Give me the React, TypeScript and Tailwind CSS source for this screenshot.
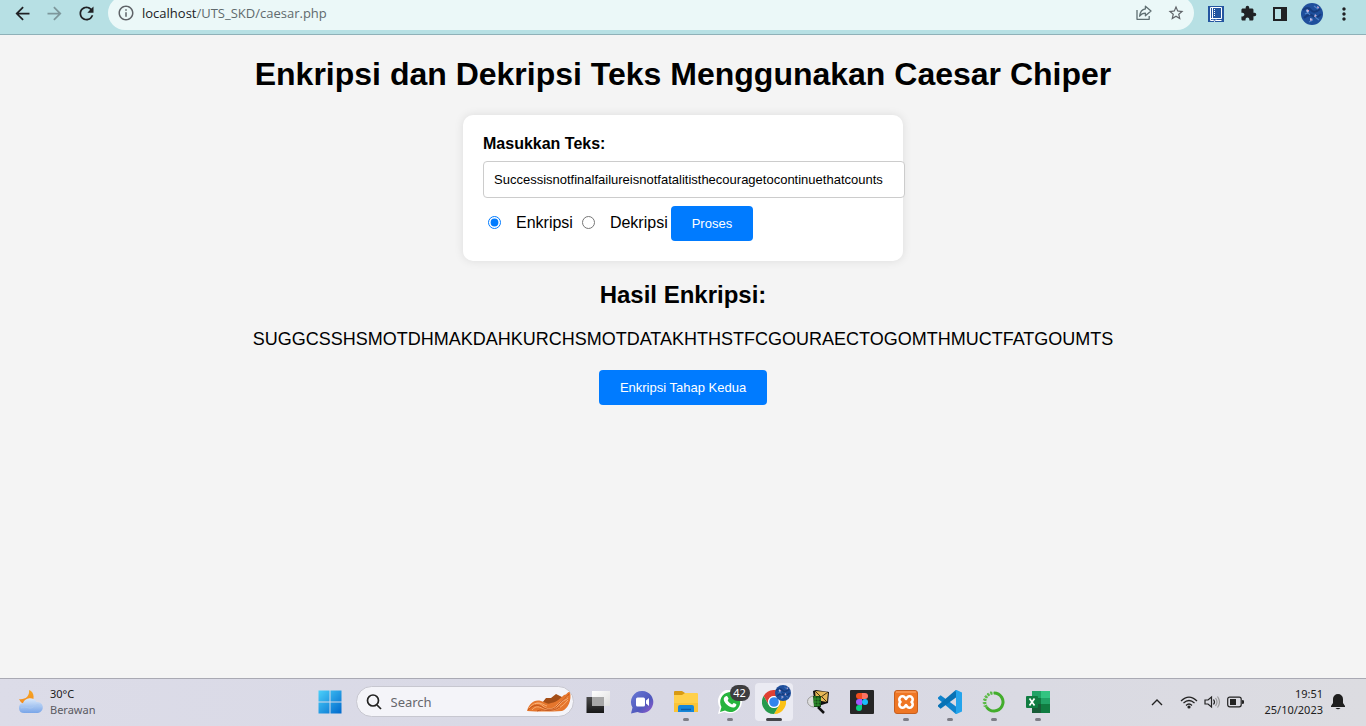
import { useState, type ReactNode } from "react";
import { MdArrowBack, MdArrowForward, MdRefresh, MdInfoOutline, MdStarBorder, MdExtension, MdMoreVert } from "react-icons/md";

function ShareIcon() {
  return (
    <svg viewBox="0 0 18 18" className="size-[18px]" fill="none" stroke="#5f6f72" strokeWidth="1.3" strokeLinejoin="round">
      <path d="M2 6v9.3h12.2V12" />
      <path d="M10.4 2.2 16 7l-5.600 4.800V9.200C7.600 9.200 6 10.200 4.600 12.200 5 8.600 6.800 5.400 10.400 4.900Z" />
    </svg>
  );
}

function JournalIcon() {
  return (
    <svg viewBox="0 0 16 16" className="size-4">
      <rect width="16" height="16" fill="#2455a0" />
      <path d="M2.500 13V1.500H13.500V12.500H2.500M2.500 12.500V14.500H5M8 14.500h5.500M4.500 1.500v11M5 13.500l1.500 2 1.500-2" fill="none" stroke="#fff" />
      <path d="M6.500 3v8" stroke="#fff" strokeDasharray="1 1" />
    </svg>
  );
}

function SidePanelIcon() {
  return (
    <svg viewBox="0 0 14 14" className="size-[14px]">
      <path fill="#202124" d="M0 0h14v14H0zM2 2v10h6V2z" fillRule="evenodd" />
    </svg>
  );
}

function Avatar({ className }: { className: string }) {
  return (
    <svg viewBox="0 0 22 22" className={className}>
      <circle cx="11" cy="11" r="11" fill="#1f4f9c" />
      <path d="M2 7q5-4 8 0t9-1M3 15q5-5 9-2t8-2" fill="none" stroke="#163b7d" strokeWidth="2" />
      <path d="M4 11q3-2 5 1M13 3l4 3M14 14l4 3M8 19l4-2" fill="none" stroke="#4c82c9" strokeWidth="1.200" />
      <path d="m6 6 2 2-1 2-2-2zM14 11l2 2-3 1zM9 15l3 1-3 2zM16 3l2 1-1 2z" fill="#b9c3ec" />
      <path d="m7 7 1 1M14 13h1M10 17h1M17 4v1" stroke="#e58eb2" />
    </svg>
  );
}

function BrowserBar() {
  return (
    <header className="flex h-[35px] shrink-0 items-start overflow-hidden border-b border-[#8fb1b8] bg-[#b7e0e4] px-[6px]">
      <nav className="flex h-[27px] items-center text-[#202124]">
        <button aria-label="Kembali" className="flex w-8 justify-center"><MdArrowBack size={21} /></button>
        <button aria-label="Maju" className="flex w-8 justify-center text-[#7d979b]"><MdArrowForward size={21} /></button>
        <button aria-label="Muat ulang" className="flex w-8 justify-center"><MdRefresh size={21} /></button>
      </nav>
      <div className="-mt-1 mr-[6px] ml-[6px] flex h-[34px] flex-1 items-center rounded-full bg-[#ebf8f8] pr-[2px] pl-[9px] text-[#5f6368]">
        <MdInfoOutline size={18} />
        <a href="#" className="ml-[7px] flex-1 pt-[2px] font-['Open_Sans','Noto_Sans',sans-serif] text-[13px] text-[#5f6a6d]">
          <span className="text-[#202124]">localhost</span>/UTS_SKD/caesar.php
        </a>
        <button aria-label="Bagikan" className="flex w-8 justify-center"><ShareIcon /></button>
        <button aria-label="Bookmark" className="flex w-8 justify-center"><MdStarBorder size={18} /></button>
      </div>
      <div className="flex h-[27px] items-center text-[#202124]">
        <button aria-label="Jurnal" className="flex w-8 justify-center"><JournalIcon /></button>
        <button aria-label="Ekstensi" className="flex w-8 justify-center"><MdExtension size={17} /></button>
        <button aria-label="Panel samping" className="flex w-8 justify-center"><SidePanelIcon /></button>
        <button aria-label="Profil" className="flex w-8 justify-center"><Avatar className="size-[22px]" /></button>
        <button aria-label="Menu" className="flex w-8 justify-center"><MdMoreVert size={20} /></button>
      </div>
    </header>
  );
}

function CipherPage() {
  const [text, setText] = useState("Successisnotfinalfailureisnotfatalitisthecouragetocontinuethatcounts");
  const [mode, setMode] = useState("enkripsi");
  const button = "h-[35px] rounded-[4px] bg-[#007bff] px-[21px] text-[13px] text-white";
  return (
    <main className="flex min-h-0 flex-1 flex-col items-center bg-[#f4f4f4] font-['Liberation_Sans',Arial,sans-serif] text-black">
      <h1 className="mt-[21px] text-[32px] leading-[37px] font-bold">Enkripsi dan Dekripsi Teks Menggunakan Caesar Chiper</h1>
      <form className="mt-[22px] w-[440px] rounded-[10px] bg-white p-5 shadow-[0_0_10px_rgba(0,0,0,0.1)]" onSubmit={(e) => e.preventDefault()}>
        <label htmlFor="teks" className="block text-[16px] leading-[18px] font-bold">Masukkan Teks:</label>
        <input id="teks" type="text" value={text} onChange={(e) => setText(e.target.value)}
          className="mt-2 block h-[37px] w-[422px] rounded-[4px] border border-[#ccc] bg-white px-[10px] text-[13px]" />
        <div className="mt-2 flex items-center text-[16px] leading-[18px]">
          <div className="flex items-center pb-[2px]">
            <input id="enkripsi" type="radio" name="mode" checked={mode === "enkripsi"} onChange={() => setMode("enkripsi")} className="mr-[15px] ml-[5px] size-[13px] accent-[#007bff]" />
            <label htmlFor="enkripsi">Enkripsi</label>
            <input id="dekripsi" type="radio" name="mode" checked={mode === "dekripsi"} onChange={() => setMode("dekripsi")} className="mr-[15px] ml-[9px] size-[13px] accent-[#007bff]" />
            <label htmlFor="dekripsi" className="mr-[3px]">Dekripsi</label>
          </div>
          <button type="submit" className={button}>Proses</button>
        </div>
      </form>
      <h2 className="mt-5 text-[24px] leading-[28px] font-bold">Hasil Enkripsi:</h2>
      <p className="mt-5 text-[18px] leading-[20px]">SUGGCSSHSMOTDHMAKDAHKURCHSMOTDATAKHTHSTFCGOURAECTOGOMTHMUCTFATGOUMTS</p>
      <button className={`mt-[21px] ${button}`}>Enkripsi Tahap Kedua</button>
    </main>
  );
}

function WeatherIcon() {
  return (
    <svg viewBox="0 0 26 26" className="size-[26px]">
      <defs>
        <linearGradient id="cloud" x2="0" y2="1"><stop stopColor="#dceafb" /><stop offset="1" stopColor="#79a5e8" /></linearGradient>
        <linearGradient id="moon" x2="0" y2="1"><stop stopColor="#f5a623" /><stop offset="1" stopColor="#f58a1f" /></linearGradient>
      </defs>
      <path fill="url(#moon)" d="M11 1c6 2 6 11 1 14-4 2-9 0-11-5 5 1 11-2 10-9Z" />
      <path fill="url(#cloud)" d="M6 24a5 5 0 0 1-1-9.900A7.500 7.500 0 0 1 18.500 13 5.500 5.500 0 0 1 20 24Z" />
      <path fill="none" stroke="#a9c8f2" d="M3 19c5-3 8 2 12-1s6-2 9 0" />
    </svg>
  );
}

function WindowsIcon() {
  return (
    <svg viewBox="0 0 24 24" className="size-6">
      <defs><linearGradient id="win" x2="1" y2="1"><stop stopColor="#4bd0fa" /><stop offset="1" stopColor="#0068cc" /></linearGradient></defs>
      <path fill="url(#win)" d="M.5.5h11v11H.5zM12.500.5h11v11h-11zM.5 12.500h11v11H.5zM12.500 12.500h11v11h-11z" />
    </svg>
  );
}

function CanyonArt() {
  return (
    <svg viewBox="0 0 46 22" className="h-[22px] w-[46px]">
      <path fill="#a34d17" d="M16 12 20 7h5l5-4 6 3v12H18Z" />
      <path fill="#e5762d" d="M1 20c2-7 7-12 14-10 4 1 6 4 10 2 7-1 9-5 13-8 3 0 4-4 6-3 2 8-2 17-8 19q-18 1-35 0Z" />
      <path fill="none" stroke="#ffc08b" strokeWidth=".7" d="M3 17c5-6 10-6 14-2s10 4 14-1 7-3 11-9M6 19c4-5 8-3 12-1s12 0 16-5 6-3 8-6M15 20h8q10 0 19-11M9 13c5-3 8 1 12 2" />
      <path fill="none" stroke="#bd4e16" strokeWidth=".8" d="M2 19c5-5 9-6 14-3s11 4 16-2 6-4 11-11M11 20c6-3 13 3 23-4" />
    </svg>
  );
}

function TaskViewIcon() {
  return (
    <svg viewBox="0 0 24 24" className="size-6">
      <defs><linearGradient id="tv" x2="0" y2="1"><stop stopColor="#4b4b4b" /><stop offset="1" stopColor="#171717" /></linearGradient>
      <linearGradient id="tw" x2="1" y2="1"><stop stopColor="#fff" /><stop offset="1" stopColor="#dedede" /></linearGradient></defs>
      <path fill="url(#tv)" d="M.5 7H18v16H.5z" />
      <path fill="url(#tw)" d="M6 1h18v15H6z" />
      <path fill="#a7a7a7" d="M6 7h12v9H6z" />
    </svg>
  );
}

function ChatIcon() {
  return (
    <svg viewBox="0 0 24 24" className="size-6">
      <defs><linearGradient id="chat" x2="1" y2="1"><stop stopColor="#6878d5" /><stop offset=".6" stopColor="#5059bd" /><stop offset="1" stopColor="#9b59cf" /></linearGradient></defs>
      <path fill="url(#chat)" d="M12.500 1a11 11 0 1 1-5 20.900L1 23.500l1.500-6A11 11 0 0 1 12.500 1Z" />
      <rect x="6" y="7.500" width="9" height="9" rx="1.500" fill="#fff" /><path d="m16 10.500 3-2.500v8l-3-2.500z" fill="#fff" />
    </svg>
  );
}

function FolderIcon() {
  return (
    <svg viewBox="0 0 24 24" className="size-6">
      <path fill="#d89a12" d="M0 2q0-1 1-1h7l3 2v5H0z" />
      <path fill="#ffd04a" d="M0 5h8l3-2h12q1 0 1 1v18H0z" />
      <path fill="#f8b928" d="M0 13h24v9H0z" opacity=".55" />
      <path fill="#1686d9" d="M4 22v-5q0-2 2-2h12q2 0 2 2v5z" /><path d="M7 19.500h10" stroke="#0b5ca7" strokeWidth="1.500" />
    </svg>
  );
}

function WhatsAppIcon() {
  return (
    <svg viewBox="0 0 24 24" className="size-6">
      <path fill="#fff" d="M0 24 1.700 17.500A12 12 0 1 1 6.500 22Z" />
      <path fill="#27b43e" d="M2 22 3.500 17A10 10 0 1 1 7 20.600Z" />
      <path fill="#fff" d="M8 6.300c1-.7 1.700.2 2.500 2.300.3.800-1 1.500-.8 2 1 1.800 2.300 3 4.300 3.800.7.100 1.300-1.600 1.900-1.400 3 1.200 2.600 1.400 2.200 2.700-.9 2.100-3.400 2.300-6.600.8-3.200-1.600-7-6-5.400-8.700.5-.8 1-1.200 1.900-1.500Z" />
    </svg>
  );
}

function ChromeIcon() {
  return (
    <svg viewBox="0 0 24 24" className="size-6">
      <path fill="#df4034" d="M1.600 6A12 12 0 0 1 22.400 6H12a6 6 0 0 0-5.200 9Z" />
      <path fill="#fbc116" d="M22.400 6A12 12 0 0 1 12 24l5.200-9A6 6 0 0 0 12 6Z" />
      <path fill="#279a4c" d="M1.600 6A12 12 0 0 0 12 24l5.200-9a6 6 0 0 1-10.400 0Z" />
      <circle cx="12" cy="12" r="6" fill="#fff" /><circle cx="12" cy="12" r="4.800" fill="#3184ed" />
    </svg>
  );
}

function MailSearchIcon() {
  return (
    <svg viewBox="0 0 24 24" className="size-6">
      <path fill="#111" d="m7 1 3-1 13 2-1 11-13 4Z" /><path fill="#e5b756" d="M9 1 22 2l-1 10-11-2Z" />
      <path d="m9 1 6 6 7-5M14 7l-4 3M16 7l5 5" fill="none" stroke="#403010" />
      <path fill="#ddd" stroke="#999" d="M8 6a6.500 5.500 0 1 0 0 11" /><path fill="#164d16" d="M7 6h8v11H8Z" />
      <path d="M9 6v10M12 7v9M7 9h8M7 12h8M8 15h6" stroke="#38a436" strokeWidth=".8" />
      <path d="m12 17 6 6" stroke="#111" strokeWidth="2.500" />
    </svg>
  );
}

function FigmaIcon() {
  return (
    <svg viewBox="0 0 24 24" className="size-6">
      <rect width="24" height="24" rx="1" fill="#262626" />
      <path fill="#f24e1e" d="M12 3H9a3 3 0 0 0 0 6h3z" /><path fill="#ff7262" d="M12 3h3a3 3 0 0 1 0 6h-3z" />
      <path fill="#a259ff" d="M12 9H9a3 3 0 0 0 0 6h3z" /><circle cx="15" cy="12" r="3" fill="#1abcfe" />
      <path fill="#0acf83" d="M12 15H9a3 3 0 1 0 3 3z" />
    </svg>
  );
}

function XamppIcon() {
  return (
    <svg viewBox="0 0 24 24" className="size-6">
      <rect x=".5" y=".5" width="23" height="23" rx="2.500" fill="#ef7624" stroke="#c65f1e" />
      <path d="M2 2h20" stroke="#ffae73" />
      <path d="M12 9 10.500 7A3 3 0 1 0 6.500 12 3 3 0 1 0 10.500 17L12 15 13.500 17A3 3 0 1 0 17.500 12 3 3 0 1 0 13.500 7Z" fill="none" stroke="#fff" strokeWidth="2.600" strokeLinejoin="round" />
    </svg>
  );
}

function CodeIcon() {
  return (
    <svg viewBox="0 0 24 24" className="size-6">
      <path fill="#0f83cc" d="M0 7.500 2.600 5.300 19 17.200V23.500L17.500 23.700 0 8.800Z" />
      <path fill="#0872b5" d="M0 16.500 2.600 18.700 19 6.800V.5L17.500.3 0 15.200Z" />
      <path fill="#24a4ec" d="M17 .8 18.500 0 24 2.500v19L18.500 24 17 23.200l1-1.200V2Z" />
    </svg>
  );
}

function AnacondaIcon() {
  return (
    <svg viewBox="0 0 24 24" className="size-6">
      <path d="M12 3a9 9 0 1 1-7.500 14" fill="none" stroke="#43ad2c" strokeWidth="3" />
      <path d="M4.500 17A9 9 0 0 1 12 3" fill="none" stroke="#5abb45" strokeWidth="2.600" strokeDasharray="2.200 .9" />
      <path d="M2.500 17A10.500 10.500 0 0 1 10 1.700" fill="none" stroke="#43ad2c" strokeDasharray="1.500 2" />
    </svg>
  );
}

function ExcelIcon() {
  return (
    <svg viewBox="0 0 24 24" className="size-6">
      <path fill="#21a366" d="M6 1h9v7H6z" /><path fill="#33c481" d="M15 1h9v7h-9z" />
      <path fill="#107c41" d="M6 8h9v7H6z" /><path fill="#21a366" d="M15 8h9v6h-9z" />
      <path fill="#185c37" d="M6 14h9v9H6z" /><path fill="#107c41" d="M15 14h9v9h-9z" />
      <rect y="6" width="12" height="12" rx="1" fill="#107c41" />
      <path d="m3.500 8.500 5 7M8.500 8.500l-5 7" stroke="#fff" strokeWidth="1.700" />
    </svg>
  );
}

function TaskItem({ label, children, open = false, active = false }: { label: string; children: ReactNode; open?: boolean; active?: boolean }) {
  return (
    <button aria-label={label} className="flex w-11 justify-center">
      <span className={`relative flex h-[38px] w-[38px] flex-col items-center rounded-[4px] pt-[7px] ${active ? "bg-[#ebebf3]" : ""}`}>
        {children}
        {active ? <span className="mt-1 h-[3px] w-4 rounded-full bg-[#44444a]" /> : open ? <span className="mt-1 h-[3px] w-[6px] rounded-full bg-[#7d7d86]" /> : null}
      </span>
    </button>
  );
}

function StatusIcons() {
  return (
    <>
      <button aria-label="Ikon tersembunyi" className="mr-[17px]">
        <svg viewBox="0 0 12 8" className="h-2 w-3"><path d="m1 7 5-5 5 5" fill="none" stroke="#222" strokeWidth="1.400" /></svg>
      </button>
      <button aria-label="Jaringan, suara, baterai" className="mr-5 flex items-center gap-[6px]">
        <svg viewBox="0 0 18 14" className="h-[14px] w-[18px]" fill="none" stroke="#222" strokeWidth="1.200">
          <path d="M1 6q8-8 16 0M3.500 8q5.500-5 11 0M6 10.500q3-3 6 0" /><circle cx="9" cy="12" r="1" fill="#222" />
        </svg>
        <svg viewBox="0 0 17 14" className="h-[14px] w-[17px]" fill="none" stroke="#222" strokeWidth="1.200">
          <path d="M1 5h3l3.500-3v10L4 9H1Z" /><path d="M9.500 4.500q2 2.500 0 5" /><path stroke="#999" d="M11.500 3q3 4 0 8M13.500 1.500q4 5.500 0 11" />
        </svg>
        <svg viewBox="0 0 17 12" className="h-3 w-[17px]"><rect x=".7" y="1.200" width="13.500" height="9.600" rx="2" fill="none" stroke="#222" strokeWidth="1.200" /><path fill="#222" d="M3 3h6v6H3zM15 4l2 .5v3L15 8z" /></svg>
      </button>
    </>
  );
}

function Taskbar() {
  return (
    <footer className="grid h-12 shrink-0 grid-cols-[1fr_auto_1fr] items-center border-t border-[#a9a9b3] bg-linear-to-r from-[#dcdce8] via-[#d8d8e5] to-[#dcdce1] pb-[2px] pl-px font-['Noto_Sans','Open_Sans',sans-serif] text-[11px] leading-4 text-[#202020]">
      <div className="flex items-center gap-[6px] pl-[17px]">
        <WeatherIcon />
        <p>30°C<br /><span className="text-[#5a5a62]">Berawan</span></p>
      </div>
      <div className="flex items-center">
        <TaskItem label="Mulai"><WindowsIcon /></TaskItem>
        <div className="mr-[2px] ml-1 flex h-[31px] w-[218px] items-center overflow-hidden rounded-full border border-[#c7c7d0] bg-[#f4f4f9] pr-px pl-[9px]">
          <svg viewBox="0 0 16 16" className="size-4 shrink-0" fill="none" stroke="#222" strokeWidth="1.700"><circle cx="7" cy="6.500" r="5.500" /><path d="m11 11 4 4" /></svg>
          <input aria-label="Search" placeholder="Search" className="ml-[9px] w-0 flex-1 text-[13px] placeholder:text-[#67676d]" />
          <CanyonArt />
        </div>
        <TaskItem label="Tampilan tugas"><TaskViewIcon /></TaskItem>
        <TaskItem label="Obrolan"><ChatIcon /></TaskItem>
        <TaskItem label="File" open><FolderIcon /></TaskItem>
        <TaskItem label="WhatsApp" open>
          <WhatsAppIcon />
          <span className="absolute top-[2px] -right-px flex h-4 w-5 items-center justify-center rounded-full bg-[#3d3d3f] text-[11px] text-white">42</span>
        </TaskItem>
        <TaskItem label="Chrome" active><ChromeIcon /><Avatar className="absolute top-[2px] right-[2px] size-4" /></TaskItem>
        <TaskItem label="Pencarian surat"><MailSearchIcon /></TaskItem>
        <TaskItem label="Figma"><FigmaIcon /></TaskItem>
        <TaskItem label="XAMPP" open><XamppIcon /></TaskItem>
        <TaskItem label="Visual Studio Code" open><CodeIcon /></TaskItem>
        <TaskItem label="Anaconda" open><AnacondaIcon /></TaskItem>
        <TaskItem label="Excel" open><ExcelIcon /></TaskItem>
      </div>
      <div className="flex items-center justify-end pr-[21px]">
        <StatusIcons />
        <time className="text-right">19:51<br />25/10/2023</time>
        <button aria-label="Notifikasi" className="ml-2">
          <svg viewBox="0 0 14 16" className="h-4 w-[14px]" fill="#1f1f1f"><path d="M7 0a5 5 0 0 1 5 5v4l2 3v1H0v-1l2-3V5a5 5 0 0 1 5-5ZM4.500 14h5q-2.500 2.500-5 0Z" /></svg>
        </button>
      </div>
    </footer>
  );
}

export default function App() {
  return (
    <div className="flex h-screen flex-col overflow-hidden">
      <BrowserBar />
      <CipherPage />
      <Taskbar />
    </div>
  );
}
